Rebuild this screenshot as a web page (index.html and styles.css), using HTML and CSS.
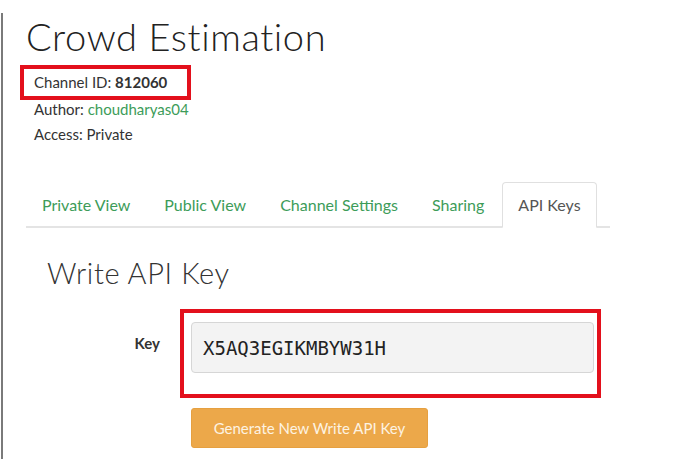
FILE: index.html
```html
<!DOCTYPE html>
<html lang="en">
<head>
<meta charset="UTF-8">
<title>Crowd Estimation - API Keys</title>
<link rel="stylesheet" href="styles.css">
</head>
<body>
<div class="page">
    <h1 class="title">Crowd Estimation</h1>

    <div class="meta">
        <div class="meta-line highlight">Channel ID: <strong>812060</strong></div>
        <div class="meta-line author">Author: <a href="#">choudharyas04</a></div>
        <div class="meta-line">Access: Private</div>
    </div>

    <ul class="tabs">
        <li><a href="#">Private View</a></li>
        <li><a href="#">Public View</a></li>
        <li><a href="#">Channel Settings</a></li>
        <li><a href="#">Sharing</a></li>
        <li class="active"><a href="#">API Keys</a></li>
    </ul>

    <h2 class="section-title">Write API Key</h2>

    <div class="form-row">
        <label class="field-label" for="key">Key</label>
        <div class="highlight-box">
            <input class="key-input" id="key" type="text" value="X5AQ3EGIKMBYW31H" readonly>
        </div>
    </div>

    <div class="actions">
        <button class="btn-warning">Generate New Write API Key</button>
    </div>
</div>
</body>
</html>
```

FILE: styles.css
```css
* { margin: 0; padding: 0; box-sizing: border-box; }
body {
    background: #fff;
    color: #333;
    font-family: 'Lato', 'Open Sans', sans-serif;
    font-size: 15px;
}
a {
    color: #3d9c59;
    text-decoration: none;
}
.page {
    margin-left: 1px;
    border-left: 2px solid #7a7a7a;
    min-height: 459px;
    padding-left: 17px;
}
.title {
    margin: 13px 0 0 6px;
    font-size: 38px;
    font-weight: 300;
    line-height: 46px;
    color: #222;
    letter-spacing: 0.6px;
}
.meta {
    margin-top: 6px;
}
.meta-line {
    line-height: 25px;
    padding-left: 14px;
}
.meta-line.author {
    margin-top: -3px;
}
.meta-line.highlight {
    display: inline-block;
    border: 4px solid #e3101c;
    padding: 2px 20px 2px 10px;
    line-height: 23px;
}
.meta-line strong {
    font-weight: 700;
}
.tabs {
    list-style: none;
    display: flex;
    margin: 35px 0 0 6px;
    width: 584px;
    border-bottom: 2px solid #e4e4e4;
}
.tabs li {
    flex-shrink: 0;
    margin-right: 2px;
    margin-bottom: -2px;
}
.tabs a {
    display: block;
    white-space: nowrap;
    padding: 11px 15px;
    font-size: 16px;
    line-height: 22px;
    border: 1px solid transparent;
    border-radius: 4px 4px 0 0;
}
.tabs .active a {
    color: #555;
    background: #fff;
    border-color: #e0e0e0;
    border-bottom-color: #fff;
}
.section-title {
    margin: 27px 0 0 27px;
    font-size: 29px;
    font-weight: 300;
    line-height: 35px;
    color: #333;
    letter-spacing: 0.6px;
}
.form-row {
    display: flex;
    gap: 20px;
    margin-top: 19px;
}
.field-label {
    width: 140px;
    text-align: right;
    font-weight: 700;
    padding-top: 25px;
}
.highlight-box {
    width: 421px;
    border: 4px solid #e3101c;
    padding: 9px 3px 21px 7px;
}
.key-input {
    width: 403px;
    height: 51px;
    background: #f3f3f3;
    border: 1px solid #d6d6d6;
    border-radius: 4px;
    padding: 0 11px;
    font-family: 'DejaVu Sans Mono', 'Liberation Mono', monospace;
    font-size: 19px;
    color: #222;
}
.actions {
    margin: 10px 0 0 171px;
}
.btn-warning {
    width: 237px;
    height: 40px;
    background: #eca84a;
    border: 1px solid #e6a040;
    border-radius: 3px;
    color: #fdf3e2;
    font-family: 'Lato', sans-serif;
    font-size: 15px;
}
```
